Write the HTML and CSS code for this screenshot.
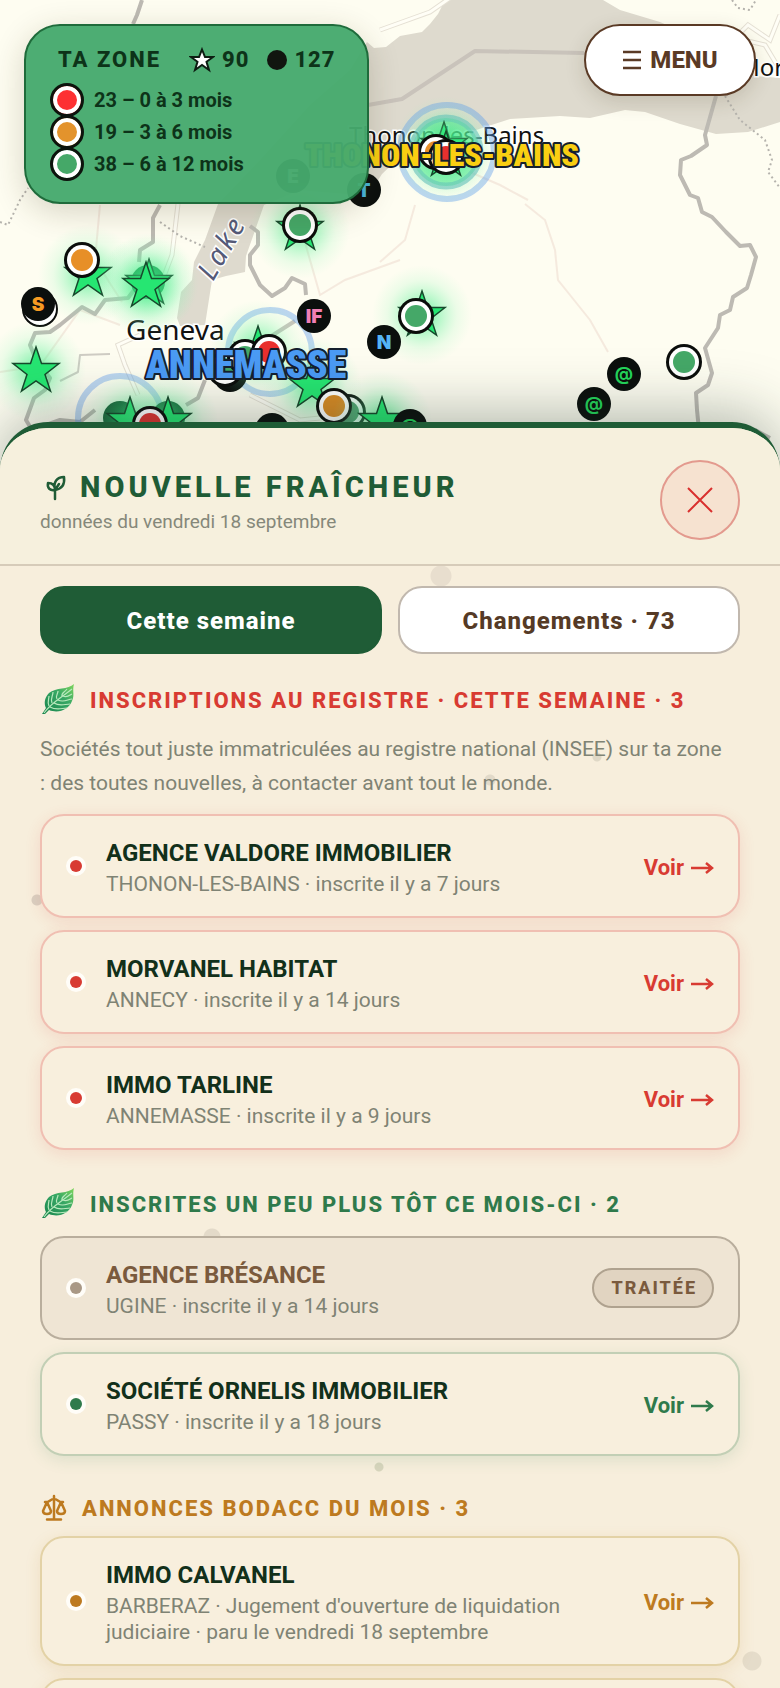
FILE: index.html
```html
<!DOCTYPE html>
<html lang="fr">
<head>
<meta charset="utf-8">
<meta name="viewport" content="width=device-width, initial-scale=1">
<title>Nouvelle fraîcheur</title>
<link rel="stylesheet" href="styles.css">
</head>
<body>
<div class="app">
  <svg class="map" viewBox="0 0 780 480" preserveAspectRatio="xMidYMin slice" role="img" aria-label="Carte de ta zone">
    <defs>
      <radialGradient id="glow"><stop offset="0" stop-color="#2bea79" stop-opacity=".7"/><stop offset=".4" stop-color="#4df090" stop-opacity=".36"/><stop offset=".7" stop-color="#7df5ae" stop-opacity=".14"/><stop offset="1" stop-color="#8ff5b8" stop-opacity="0"/></radialGradient>
      <g id="star"><circle r="50" fill="url(#glow)"/><path d="M0-24 5.500-7.500 23-7.500 9 3.500 14.500 20 0 10-14.500 20-9 3.500-23-7.500-5.500-7.500Z" fill="#26e672" stroke="#17492c" stroke-width="1.500"/></g>
      <g id="ring"><circle r="18" fill="#0b0d0b"/><circle r="15" fill="#fff"/><circle r="11" fill="currentColor"/></g>
      <circle id="disc" r="17" fill="#0b0f0d"/>
    </defs>
    <rect width="780" height="480" fill="#fefdf1"/>
    <path d="M445 0 438 14 430 24 422 32 400 36 386 47 374 48 367 42 350 70 310 105 260 160 218 204 205 240 194 262 192 280 181 292 177 318 180 326 205 325 212 280 226 276 245 272 246 256 264 205 300 190 368 196 382 174 405 152 420 150 470 132 510 119 560 116 590 118 625 110 645 112 680 124 716 134 748 132 780 122V78L756 76 700 40 660 22 640 16 620 10 603 0Z" fill="#dedace"/>
    <g fill="none" stroke="#f3e5da" stroke-width="2" opacity=".8">
      <path d="M100 205 95 260 122 302M380 262 405 240 415 205 M525 204 545 220 555 250 558 280 570 295 590 320 608 352M300 225 320 295 345 280 400 260M0 372 40 366 80 310 120 325 M528 200 500 185 470 172"/>
    </g>
    <g fill="none" stroke="#e5e0d4" stroke-width="5"><path d="M178 204 172 255 155 300M140 335 118 345 125 365 138 395 M250 395 300 420 320 418M380 30 430 12 450-2M780 15 770 40 748 25 735 38 765 45 780 70"/></g>
    <g fill="none" stroke="#fffef6" stroke-width="3"><path d="M178 204 172 255 155 300M140 335 118 345 125 365 138 395 M250 395 300 420 320 418M380 30 430 12 450-2M780 15 770 40 748 25 735 38 765 45 780 70"/></g>
    <g fill="none" stroke="#bdbab3" stroke-width="4" stroke-linejoin="round">
      <path d="M716 96 705 135 707 145 691 156 681 160 680 175 690 195 698 198 702 212 712 217 726 232 740 246 750 245 756 257 751 275 747 288 733 297 730 310 720 315 718 328 705 348 712 373 708 385 696 393 697 410 699 430"/>
      <path d="M142 0 137 15 133 24M160 205 153 218 153 242 140 250 139 262M134 290 128 298 105 300 95 314 82 307 60 325 50 332 35 333 30 345 36 360 50 378 45 390 34 398 26 420 32 430 60 420 80 422 95 410M250 226 258 232 258 245 250 255 250 265 260 285 272 296 285 288 292 278 305 284 306 295M186 405 198 398 205 380M755 430 770 438"/>
      <path d="M368 105 402 99 475 51 584 53M295 321 265 340" stroke="#c9c3bb"/>
      <path d="M60 381 78 372 80 355 110 354" stroke="#cfccc4" stroke-width="2"/>
    </g>
    <g fill="none" stroke="#b5b3ad" stroke-width="2" stroke-dasharray="2 3"><path d="M0 222 8 225 20 200 28 188M160 222 180 236 205 247M725 96 740 120 765 140 772 160 768 172 780 188M732 0 738 8 750 10 756 0"/></g>

    <g class="place">
      <text x="349" y="144">Thonon-les-Bains</text>
      <text x="738" y="76">Mor</text>
      <text class="place-big" x="126" y="340">Geneva</text>
      <text class="place-lake" transform="translate(213 282) rotate(-60)">Lake</text>
    </g>

    <g fill="none" stroke="#5b98ee" stroke-opacity=".4" stroke-width="6">
      <circle cx="447" cy="152" r="47"/><circle cx="270" cy="352" r="42"/><circle cx="120" cy="418" r="42"/>
    </g>
    <circle cx="446" cy="152" r="34" fill="#34df7d" fill-opacity=".5" stroke="#5fb0c0" stroke-opacity=".6" stroke-width="7"/>
    <use href="#star" x="444" y="146"/><use href="#star" x="446" y="155"/>
    <use href="#ring" x="436" y="152" color="#e78f27"/><use href="#ring" x="446" y="157" color="#e9302e"/>

    <g class="pin-letter">
      <use href="#disc" x="293" y="176"/><text x="293" y="183" fill="#bbb">E</text>
      <use href="#disc" x="364" y="190"/><text x="364" y="197" fill="#49b7dd">T</text>
    </g>

    <use href="#star" x="88" y="275"/><use href="#ring" x="82" y="260" color="#e78f27"/>
    <circle cx="148" cy="282" r="17" fill="#0b6b35"/><use href="#star" x="149" y="283"/>
    <use href="#star" x="146" y="286"/>
    <circle cx="40" cy="309" r="17" fill="#fff" stroke="#0b0d0b" stroke-width="2"/>
    <use href="#star" x="36" y="371"/>
    <use href="#star" x="300" y="229"/><use href="#ring" x="300" y="225" color="#45a868"/>
    <use href="#star" x="422" y="315"/><use href="#ring" x="416" y="316" color="#45a868"/>
    <use href="#ring" x="684" y="362" color="#45a868"/>

    <use href="#disc" x="230" y="375"/><use href="#star" x="258" y="350"/>
    <use href="#ring" x="225" y="369" color="#45a868"/><use href="#ring" x="245" y="357" color="#45a868"/>
    <use href="#ring" x="269" y="352" color="#e9302e"/>
    <use href="#star" x="312" y="386"/>
    <use href="#ring" x="348" y="412" color="#4c9468"/><use href="#ring" x="334" y="406" color="#d98b25"/>
    <use href="#disc" x="272" y="430"/>
    <circle cx="120" cy="418" r="17" fill="#073f20"/><circle cx="168" cy="418" r="17" fill="#073f20"/>
    <use href="#star" x="130" y="421"/><use href="#star" x="168" y="421"/><use href="#ring" x="150" y="424" color="#e03230"/>
    <use href="#star" x="382" y="421"/>

    <g class="pin-letter">
      <use href="#disc" x="38" y="304"/><text x="38" y="311" fill="#f79b22">S</text>
      <use href="#disc" x="314" y="316"/><text x="314" y="323" fill="#f17fb4">IF</text>
      <use href="#disc" x="384" y="342"/><text x="384" y="349" fill="#55b4f5">N</text>
      <use href="#disc" x="624" y="374"/><text class="pin-at" x="624" y="380" fill="#24d65b">@</text>
      <use href="#disc" x="594" y="404"/><text class="pin-at" x="594" y="410" fill="#24d65b">@</text>
      <use href="#disc" x="410" y="426"/><text class="pin-at" x="410" y="432" fill="#24d65b">@</text>
    </g>
    <text class="city city-blue" x="246" y="378">ANNEMASSE</text>
    <text class="city city-yellow" x="442" y="166">THONON-LES-BAINS</text>
  </svg>

  <header class="topbar">
    <section class="legend" aria-label="Ta zone">
      <div class="legend-head">
        <strong>TA ZONE</strong>
        <span class="legend-stat"><svg width="26" height="26" viewBox="0 0 26 26" aria-hidden="true"><path d="M13 2.500 16 10H24L17.500 14.800 20 23 13 18 6 23 8.500 14.800 2 10H10Z" fill="#fff" stroke="#0d1d12" stroke-width="2"/></svg>90</span>
        <span class="legend-stat"><i class="legend-disc"></i>127</span>
      </div>
      <ul class="legend-list">
        <li><i class="legend-ring ring-red"></i>23 – 0 à 3 mois</li>
        <li><i class="legend-ring ring-orange"></i>19 – 3 à 6 mois</li>
        <li><i class="legend-ring ring-green"></i>38 – 6 à 12 mois</li>
      </ul>
    </section>
    <button class="menu" type="button"><svg width="20" height="20" viewBox="0 0 20 20" aria-hidden="true"><path d="M1 2H19M1 10H19M1 18H19" stroke="currentColor" stroke-width="2.500"/></svg>MENU</button>
  </header>

  <main class="sheet">
    <header class="sheet-head">
      <div>
        <h1><svg class="sprout" width="32" height="32" viewBox="0 0 32 32" fill="none" stroke="currentColor" stroke-width="2.500" stroke-linecap="round" stroke-linejoin="round" aria-hidden="true"><path d="M15 28V18M15 19C13 11 17 6 24 6 25 14 22 18 15 19L19 13M15 19C10 20 7 17 8 12 12 12 15 14 15 19"/></svg>NOUVELLE FRAÎCHEUR</h1>
        <p class="date">données du vendredi 18 septembre</p>
      </div>
      <button class="close" type="button" aria-label="Fermer"><svg width="26" height="26" viewBox="0 0 26 26" aria-hidden="true"><path d="M1 1 25 25M25 1 1 25" stroke="currentColor" stroke-width="2"/></svg></button>
    </header>

    <div class="sheet-body">
      <div class="tabs">
        <button class="tab tab-active" type="button">Cette semaine</button>
        <button class="tab" type="button">Changements · 73</button>
      </div>

      <section class="group red">
        <h2><svg width="36" height="34" viewBox="0 0 36 34" aria-hidden="true"><defs><linearGradient id="leaf" x1="0" y1="1" x2="1" y2="0"><stop stop-color="#17824b"/><stop offset=".6" stop-color="#37a765"/><stop offset="1" stop-color="#7fd65c"/></linearGradient></defs><path id="leaf-shape" d="M34 1C28 7 16 4 9 10 4 15 4 21 6 25L2 31 5 31 9 27C19 31 29 26 32 18 35 12 32 8 34 1Z" fill="url(#leaf)"/><path id="leaf-veins" d="M4 30C11 20 21 15 32 6M9 23C7 19 9 16 9 13M12 20C10 16 13 13 13 9M17 16C15 13 18 11 18 8M22 13C21 10 25 9 27 6M10 24C17 28 22 25 27 25M14 20C20 24 25 21 30 21M18 17C24 20 28 16 32 16M23 13C27 15 30 12 32 11" fill="none" stroke="#b9e9bd" stroke-width="1.200"/></svg>INSCRIPTIONS AU REGISTRE · CETTE SEMAINE · 3</h2>
        <p class="intro">Sociétés tout juste immatriculées au registre national (INSEE) sur ta zone :&nbsp;des toutes nouvelles, à contacter avant tout le monde.</p>
        <ul class="cards">
          <li class="card"><i class="dot"></i><div class="card-text"><h3>AGENCE VALDORE IMMOBILIER</h3><p>THONON-LES-BAINS · inscrite il y a 7 jours</p></div><a class="see" href="#valdore">Voir <svg width="24" height="16" viewBox="0 0 24 16" aria-hidden="true"><path d="M1 8H22M16 3 22 8 16 13"/></svg></a></li>
          <li class="card"><i class="dot"></i><div class="card-text"><h3>MORVANEL HABITAT</h3><p>ANNECY · inscrite il y a 14 jours</p></div><a class="see" href="#morvanel">Voir <svg width="24" height="16" viewBox="0 0 24 16" aria-hidden="true"><path d="M1 8H22M16 3 22 8 16 13"/></svg></a></li>
          <li class="card"><i class="dot"></i><div class="card-text"><h3>IMMO TARLINE</h3><p>ANNEMASSE · inscrite il y a 9 jours</p></div><a class="see" href="#tarline">Voir <svg width="24" height="16" viewBox="0 0 24 16" aria-hidden="true"><path d="M1 8H22M16 3 22 8 16 13"/></svg></a></li>
        </ul>
      </section>

      <section class="group green">
        <h2><svg width="36" height="34" viewBox="0 0 36 34" aria-hidden="true"><use href="#leaf-shape"/><use href="#leaf-veins"/></svg>INSCRITES UN PEU PLUS TÔT CE MOIS-CI · 2</h2>
        <ul class="cards">
          <li class="card card-done"><i class="dot"></i><div class="card-text"><h3>AGENCE BRÉSANCE</h3><p>UGINE · inscrite il y a 14 jours</p></div><span class="badge">TRAITÉE</span></li>
          <li class="card"><i class="dot"></i><div class="card-text"><h3>SOCIÉTÉ ORNELIS IMMOBILIER</h3><p>PASSY · inscrite il y a 18 jours</p></div><a class="see" href="#ornelis">Voir <svg width="24" height="16" viewBox="0 0 24 16" aria-hidden="true"><path d="M1 8H22M16 3 22 8 16 13"/></svg></a></li>
        </ul>
      </section>

      <section class="group amber">
        <h2><svg width="28" height="28" viewBox="0 0 28 28" fill="none" stroke="currentColor" stroke-width="2.500" stroke-linecap="round" stroke-linejoin="round" aria-hidden="true"><path d="M14 2V25M7 25.500H21M5 8C9 9 10 5 14 5S19 9 23 8M7 8 3 17C3 21 11 21 11 17L7 8M21 8 17 17C17 21 25 21 25 17L21 8"/></svg>ANNONCES BODACC DU MOIS · 3</h2>
        <ul class="cards">
          <li class="card"><i class="dot"></i><div class="card-text"><h3>IMMO CALVANEL</h3><p>BARBERAZ · Jugement d'ouverture de liquidation judiciaire · paru le vendredi 18 septembre</p></div><a class="see" href="#calvanel">Voir <svg width="24" height="16" viewBox="0 0 24 16" aria-hidden="true"><path d="M1 8H22M16 3 22 8 16 13"/></svg></a></li>
          <li class="card"></li>
        </ul>
      </section>
    </div>
  </main>
</div>
</body>
</html>
```
FILE: styles.css
```css
* { box-sizing: border-box; }

body {
  margin: 0;
  font-family: Roboto, "Liberation Sans", sans-serif;
  color: #12301a;
  background: #f7eedc;
}

h1, h2, h3, p, ul { margin: 0; padding: 0; }
ul { list-style: none; }
i { display: block; flex: none; }
button { font: inherit; cursor: pointer; }
svg { flex: none; }

.app {
  position: relative;
  display: flex;
  flex-direction: column;
  height: 100vh;
  overflow: hidden;
}

/* Map */
.map {
  position: absolute;
  top: 0;
  left: 0;
  width: 100%;
  height: 480px;
}
.place {
  font-family: "Noto Sans", sans-serif;
  font-size: 24px;
  fill: #111;
  stroke: #fff;
  stroke-width: 3px;
  paint-order: stroke;
}
.place-big { font-size: 28px; }
.place-lake { font-size: 28px; font-style: italic; letter-spacing: 3px; fill: #555a78; }
.pin-letter {
  font-family: Inter, Roboto, sans-serif;
  font-weight: 900;
  font-size: 19px;
  text-anchor: middle;
}
.pin-at { font-weight: 700; font-size: 18px; }
.city {
  font-family: "Liberation Sans Narrow", "Roboto Condensed", Roboto, sans-serif;
  font-weight: 900;
  text-anchor: middle;
  stroke: #15202e;
  stroke-width: 4px;
  paint-order: stroke;
  stroke-linejoin: round;
}
.city-blue { font-size: 38px; fill: #4b9bf5; }
.city-yellow { font-size: 32px; fill: #f9cf12; }

/* Top bar */
.topbar {
  position: relative;
  flex: 0 0 25vh;
  display: flex;
  justify-content: space-between;
  align-items: flex-start;
  padding: 24px;
}
.legend {
  padding: 20px 32px 22px;
  border: 2px solid #1f6b3b;
  border-radius: 36px;
  background: rgba(70, 170, 109, .96);
  box-shadow: 0 8px 32px rgba(60, 50, 20, .2);
  color: #0d3319;
}
.legend-head {
  display: flex;
  align-items: center;
  gap: 18px;
  font-size: 22px;
  font-weight: 800;
  line-height: 28px;
  letter-spacing: 2px;
}
.legend-head strong { margin-right: 10px; font-weight: 800; }
.legend-stat { display: flex; align-items: center; gap: 7px; letter-spacing: 1px; }
.legend-disc { width: 20px; height: 20px; border-radius: 50%; background: #11150f; }
.legend-list { margin: 10px 0 0 -7px; }
.legend-list li {
  display: flex;
  align-items: center;
  gap: 11px;
  height: 32px;
  font-size: 20px;
  font-weight: 700;
}
.legend-ring {
  width: 34px;
  height: 34px;
  margin: 0 -1px;
  border: 3px solid #0d130d;
  border-radius: 50%;
  box-shadow: inset 0 0 0 4px #fff;
}
.ring-red { background: #fd3032; }
.ring-orange { background: #e3932c; }
.ring-green { background: #45a868; }
.menu {
  display: flex;
  align-items: center;
  justify-content: center;
  gap: 8px;
  min-width: 172px;
  height: 72px;
  border: 2px solid #5a3a25;
  border-radius: 36px;
  background: #fff;
  box-shadow: 0 6px 20px rgba(60, 50, 20, .16);
  color: #5a3a25;
  font-size: 24px;
  font-weight: 800;
}

/* Sheet */
.sheet {
  position: relative;
  flex: 1;
  min-height: 0;
  display: flex;
  flex-direction: column;
  overflow: hidden;
  border-top: 6px solid #1f5c36;
  border-radius: 48px 48px 0 0;
  background: #f7eedc;
  box-shadow: 0 -8px 60px rgba(30, 50, 40, .35);
}
.sheet-head {
  display: flex;
  justify-content: space-between;
  align-items: flex-start;
  padding: 32px 40px 24px;
  border-bottom: 2px solid #d6cbb9;
  background: #f6f0dd;
}
h1 {
  display: flex;
  align-items: center;
  gap: 8px;
  color: #1f5c36;
  font-size: 29px;
  font-weight: 800;
  line-height: 54px;
  letter-spacing: 4px;
}
.date { color: #85887a; font-size: 19px; line-height: 16px; }
.close {
  display: grid;
  place-items: center;
  width: 80px;
  height: 80px;
  border: 2px solid #e39a8e;
  border-radius: 50%;
  background: #f6e2d0;
  color: #d9302e;
}
.sheet-body {
  flex: 1;
  min-height: 0;
  overflow-y: auto;
  scrollbar-width: none;
  padding: 20px 40px 0;
  background:
    radial-gradient(circle at 441px 10px, #e8dece 10px, transparent 11px),
    radial-gradient(circle at 597px 191px, #dfd8c6 4px, transparent 5px),
    radial-gradient(circle at 490px 214px, #e2dac9 5px, transparent 6px),
    radial-gradient(circle at 37px 334px, #d9cfc0 5px, transparent 6px),
    radial-gradient(circle at 212px 671px, #e3dac9 8px, transparent 9px),
    radial-gradient(circle at 379px 901px, #d8d5bd 4px, transparent 5px),
    radial-gradient(circle at 752px 1095px, #e5dcca 9px, transparent 10px);
}
.tabs { display: grid; grid-template-columns: 1fr 1fr; gap: 16px; }
.tab {
  height: 68px;
  padding-top: 3px;
  border: 2px solid #c1b8ae;
  border-radius: 24px;
  background: #fff;
  color: #553a26;
  font-size: 24px;
  font-weight: 800;
  letter-spacing: 1px;
}
.tab-active { border-color: #1f5c36; background: #1f5c36; color: #fff; }

.group { margin-top: 22px; }
h2 {
  display: flex;
  align-items: center;
  gap: 14px;
  height: 48px;
  margin-bottom: 8px;
  color: var(--tone);
  font-size: 22px;
  font-weight: 800;
  letter-spacing: 2px;
  white-space: nowrap;
}
.green { margin-top: 30px; }
.amber { margin-top: 28px; }
.amber h2 { margin-bottom: 4px; }
.intro {
  margin-bottom: 14px;
  color: #7f8374;
  font-size: 21px;
  line-height: 34px;
}
.cards { display: grid; gap: 12px; }
.card {
  display: flex;
  align-items: center;
  min-height: 104px;
  gap: 24px;
  padding: 19px 24px 19px 28px;
  border: 2px solid var(--edge);
  border-radius: 24px;
  background: #f8efdd;
  box-shadow: 0 4px 16px var(--shade);
}
.dot {
  width: 12px;
  height: 12px;
  border-radius: 50%;
  background: var(--tone);
  box-shadow: 0 0 0 4px #fffdf8;
}
.card-text { flex: 1; min-width: 0; padding-top: 2px; }
h3 { font-size: 24px; font-weight: 700; line-height: 32px; }
.card-text p {
  max-width: 480px;
  margin-top: 2px;
  color: #7f8374;
  font-size: 21px;
  line-height: 26px;
}
.see {
  display: flex;
  align-items: center;
  gap: 6px;
  padding-top: 3px;
  color: var(--tone);
  font-size: 22px;
  font-weight: 700;
  text-decoration: none;
}
.see svg { fill: none; stroke: currentColor; stroke-width: 2.5px; }

.red { --tone: #d83b32; --edge: #f0bfb2; --shade: rgba(216, 59, 50, .12); }
.green { --tone: #2f7a4b; --edge: #c2cfb5; --shade: rgba(47, 122, 75, .13); }
.amber { --tone: #bd7a20; --edge: #e3d2a6; --shade: rgba(189, 122, 32, .13); }

.card-done {
  --tone: #a99885;
  border-color: #b9ae9d;
  background: #efe5d4;
  box-shadow: none;
}
.card-done h3 { color: #7a5a3d; }
.badge {
  padding: 0 15px 0 17px;
  border: 2px solid #afa28f;
  border-radius: 20px;
  background: #e1d4c1;
  color: #7a5a3d;
  font-size: 18px;
  font-weight: 800;
  line-height: 36px;
  letter-spacing: 2px;
}
```
